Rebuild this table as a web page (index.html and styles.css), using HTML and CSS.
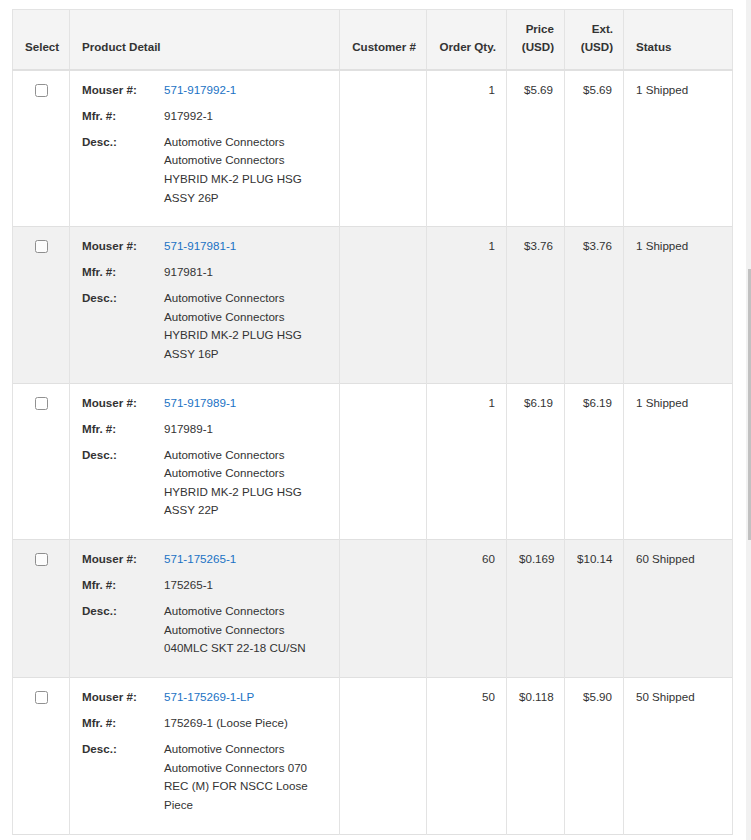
FILE: index.html
```html
<!DOCTYPE html>
<html>
<head>
<meta charset="utf-8">
<link rel="stylesheet" href="styles.css">
</head>
<body>
<div class="page">
  <table class="orders">
    <colgroup>
      <col class="c-select"><col class="c-detail"><col class="c-cust"><col class="c-qty"><col class="c-price"><col class="c-ext"><col class="c-status">
    </colgroup>
    <thead>
      <tr>
        <th>Select</th>
        <th>Product Detail</th>
        <th class="r">Customer #</th>
        <th class="r">Order Qty.</th>
        <th class="r">Price<br>(USD)</th>
        <th class="r">Ext.<br>(USD)</th>
        <th>Status</th>
      </tr>
    </thead>
    <tbody>
      <tr>
        <td class="sel"><input type="checkbox"></td>
        <td>
          <div class="field"><span class="lbl">Mouser #:</span><a class="val link" href="#">571-917992-1</a></div>
          <div class="field"><span class="lbl">Mfr. #:</span><span class="val">917992-1</span></div>
          <div class="field"><span class="lbl">Desc.:</span><span class="val">Automotive Connectors<br>Automotive Connectors<br>HYBRID MK-2 PLUG HSG<br>ASSY 26P</span></div>
        </td>
        <td class="r"></td>
        <td class="r">1</td>
        <td class="r">$5.69</td>
        <td class="r">$5.69</td>
        <td>1 Shipped</td>
      </tr>
      <tr>
        <td class="sel"><input type="checkbox"></td>
        <td>
          <div class="field"><span class="lbl">Mouser #:</span><a class="val link" href="#">571-917981-1</a></div>
          <div class="field"><span class="lbl">Mfr. #:</span><span class="val">917981-1</span></div>
          <div class="field"><span class="lbl">Desc.:</span><span class="val">Automotive Connectors<br>Automotive Connectors<br>HYBRID MK-2 PLUG HSG<br>ASSY 16P</span></div>
        </td>
        <td class="r"></td>
        <td class="r">1</td>
        <td class="r">$3.76</td>
        <td class="r">$3.76</td>
        <td>1 Shipped</td>
      </tr>
      <tr>
        <td class="sel"><input type="checkbox"></td>
        <td>
          <div class="field"><span class="lbl">Mouser #:</span><a class="val link" href="#">571-917989-1</a></div>
          <div class="field"><span class="lbl">Mfr. #:</span><span class="val">917989-1</span></div>
          <div class="field"><span class="lbl">Desc.:</span><span class="val">Automotive Connectors<br>Automotive Connectors<br>HYBRID MK-2 PLUG HSG<br>ASSY 22P</span></div>
        </td>
        <td class="r"></td>
        <td class="r">1</td>
        <td class="r">$6.19</td>
        <td class="r">$6.19</td>
        <td>1 Shipped</td>
      </tr>
      <tr>
        <td class="sel"><input type="checkbox"></td>
        <td>
          <div class="field"><span class="lbl">Mouser #:</span><a class="val link" href="#">571-175265-1</a></div>
          <div class="field"><span class="lbl">Mfr. #:</span><span class="val">175265-1</span></div>
          <div class="field"><span class="lbl">Desc.:</span><span class="val">Automotive Connectors<br>Automotive Connectors<br>040MLC SKT 22-18 CU/SN</span></div>
        </td>
        <td class="r"></td>
        <td class="r">60</td>
        <td class="r">$0.169</td>
        <td class="r">$10.14</td>
        <td>60 Shipped</td>
      </tr>
      <tr>
        <td class="sel"><input type="checkbox"></td>
        <td>
          <div class="field"><span class="lbl">Mouser #:</span><a class="val link" href="#">571-175269-1-LP</a></div>
          <div class="field"><span class="lbl">Mfr. #:</span><span class="val">175269-1 (Loose Piece)</span></div>
          <div class="field"><span class="lbl">Desc.:</span><span class="val">Automotive Connectors<br>Automotive Connectors 070<br>REC (M) FOR NSCC Loose<br>Piece</span></div>
        </td>
        <td class="r"></td>
        <td class="r">50</td>
        <td class="r">$0.118</td>
        <td class="r">$5.90</td>
        <td>50 Shipped</td>
      </tr>
    </tbody>
  </table>
</div>
<div class="scrollbar"><div class="thumb"></div></div>
</body>
</html>
```

FILE: styles.css
```css
html, body {
  margin: 0;
  padding: 0;
  background: #fff;
}
body {
  font-family: "Liberation Sans", Arial, sans-serif;
  font-size: 11.6px;
  line-height: 18.6px;
  color: #333;
  overflow: hidden;
}
.page {
  padding: 9px 0 0 12px;
}
.orders {
  border-collapse: collapse;
  table-layout: fixed;
  width: 721px;
  border: 1px solid #e0e0e0;
}
.c-select { width: 57px; }
.c-detail { width: 270px; }
.c-cust { width: 87px; }
.c-qty { width: 80px; }
.c-price { width: 58px; }
.c-ext { width: 59px; }
.c-status { width: 109px; }

.orders th {
  background: #f4f4f4;
  font-weight: bold;
  text-align: left;
  vertical-align: bottom;
  padding: 9px 10px 12px 12px;
  border: 1px solid #e3e3e3;
  border-bottom: 2px solid #e0e0e0;
  height: 38px;
}
.orders td {
  vertical-align: top;
  padding: 10px 11px 12px 12px;
  border-left: 1px solid #e3e3e3;
  border-right: 1px solid #e3e3e3;
  border-top: 1px solid #e0e0e0;
}
.orders tbody tr:nth-child(even) td {
  background: #f1f1f1;
}
.orders .r {
  text-align: right;
}
.orders td.sel {
  text-align: center;
  padding-left: 0;
  padding-right: 0;
}
.sel input {
  margin: 3px 0 0 1px;
  width: 13px;
  height: 13px;
  opacity: 0.8;
}
.field {
  display: grid;
  grid-template-columns: 82px 1fr;
  margin-bottom: 7.3px;
}
.lbl {
  font-weight: bold;
}
.link {
  color: #1a72c4;
  text-decoration: none;
}
.scrollbar {
  position: fixed;
  top: 0;
  right: 0;
  bottom: 0;
  width: 5px;
  background: #f1f1f1;
}
.thumb {
  position: absolute;
  top: 269px;
  left: 2px;
  width: 3px;
  height: 271px;
  background: #c1c1c1;
}
```
